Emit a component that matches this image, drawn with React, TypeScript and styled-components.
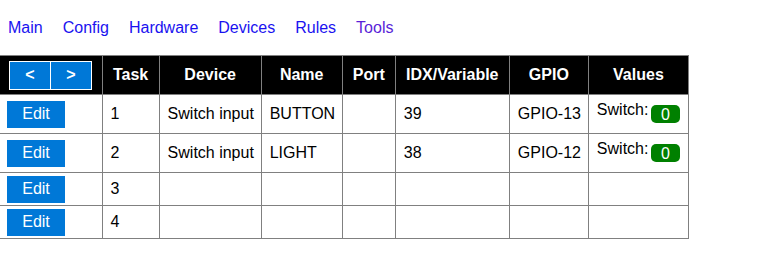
import styled, { createGlobalStyle } from "styled-components";

const GlobalStyle = createGlobalStyle`
  body {
    margin: 0;
    background: #fff;
    font-family: "Liberation Sans", Arial, sans-serif;
    font-size: 16px;
  }
`;

type Task = {
  nr: number;
  device?: string;
  name?: string;
  idx?: string;
  gpio?: string;
  value?: string;
};

const tasks: Task[] = [
  { nr: 1, device: "Switch input", name: "BUTTON", idx: "39", gpio: "GPIO-13", value: "0" },
  { nr: 2, device: "Switch input", name: "LIGHT", idx: "38", gpio: "GPIO-12", value: "0" },
  { nr: 3 },
  { nr: 4 },
];

const menu = ["Main", "Config", "Hardware", "Devices", "Rules", "Tools"];
const columns = [102, 57, 102, 81, 53, 114, 79, 100];

const App = () => {
  return (
    <>
      <GlobalStyle />
      <Nav>
        {menu.map((m) => (
          <MenuLink key={m} href="#" $visited={m === "Tools"}>
            {m}
          </MenuLink>
        ))}
      </Nav>
      <Table>
        <colgroup>
          {columns.map((w, i) => (
            <col key={i} style={{ width: w }} />
          ))}
        </colgroup>
        <thead>
          <tr>
            <Th>
              <PageButtons>
                <PageButton>&lt;</PageButton>
                <PageButton>&gt;</PageButton>
              </PageButtons>
            </Th>
            <Th>Task</Th>
            <Th>Device</Th>
            <Th>Name</Th>
            <Th>Port</Th>
            <Th>IDX/Variable</Th>
            <Th>GPIO</Th>
            <Th>Values</Th>
          </tr>
        </thead>
        <tbody>
          {tasks.map((t) => (
            <tr key={t.nr}>
              <Td $tall={!!t.device}>
                <EditButton>Edit</EditButton>
              </Td>
              <Td $tall={!!t.device}>{t.nr}</Td>
              <Td $tall={!!t.device}>{t.device}</Td>
              <Td $tall={!!t.device}>{t.name}</Td>
              <Td $tall={!!t.device} />
              <Td $tall={!!t.device}>{t.idx}</Td>
              <Td $tall={!!t.device}>{t.gpio}</Td>
              <ValueCell $tall={!!t.device}>
                {t.value !== undefined && (
                  <ValueRow>
                    <span>Switch:</span>
                    <Badge>{t.value}</Badge>
                  </ValueRow>
                )}
              </ValueCell>
            </tr>
          ))}
        </tbody>
      </Table>
    </>
  );
};

export default App;

const Nav = styled.div`
  display: flex;
  gap: 20px;
  padding: 19px 8px 18px 8px;
  line-height: 18px;
`;

const MenuLink = styled.a<{ $visited?: boolean }>`
  color: ${(p) => (p.$visited ? "#5a1fd8" : "#1a12f0")};
  text-decoration: none;
`;

const Table = styled.table`
  border-collapse: collapse;
  table-layout: fixed;
  width: 689px;
  color: #000;
  border-top: 1px solid #808080;
  border-right: 1px solid #808080;
`;

const Th = styled.th`
  background: #000;
  color: #fff;
  font-weight: bold;
  height: 38px;
  padding: 0 8px;
  text-align: center;
  border: 1px solid #808080;
  border-top: none;
  &:first-child {
    border-left: none;
    padding: 0 0 0 9px;
    text-align: left;
  }
`;

const Td = styled.td<{ $tall?: boolean }>`
  height: ${(p) => (p.$tall ? 38 : 32)}px;
  padding: 0 8px;
  border: 1px solid #808080;
  line-height: 18px;
  white-space: nowrap;
  &:first-child {
    border-left: none;
    padding: 0 0 0 7px;
  }
`;

const ValueCell = styled(Td)`
  height: ${(p) => (p.$tall ? 32 : 26)}px;
  vertical-align: top;
  padding-top: 6px;
`;

const ValueRow = styled.div`
  display: flex;
  justify-content: space-between;
  align-items: flex-start;
`;

const Badge = styled.span`
  margin-top: 4px;
  height: 18px;
  width: 29px;
  line-height: 19px;
  text-align: center;
  background: #008000;
  color: #fff;
  border-radius: 5px;
`;

const PageButtons = styled.div`
  display: inline-flex;
  border: 1px solid #fff;
  gap: 1px;
  background: #fff;
`;

const PageButton = styled.button`
  width: 40px;
  height: 27px;
  border: none;
  padding: 0;
  background: #0078d7;
  color: #fff;
  font-family: inherit;
  font-size: 16px;
  font-weight: bold;
`;

const EditButton = styled.button`
  width: 58px;
  height: 27px;
  border: none;
  padding: 0;
  background: #0078d7;
  color: #fff;
  font-family: inherit;
  font-size: 16px;
  display: block;
`;
